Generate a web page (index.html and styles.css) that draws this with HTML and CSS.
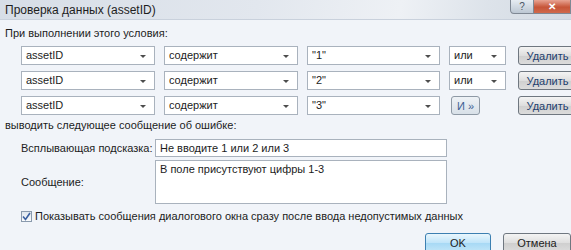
FILE: index.html
```html
<!DOCTYPE html>
<html lang="ru">
<head>
    <meta charset="UTF-8">
    <title>Проверка данных (assetID)</title>
    <link rel="stylesheet" href="styles.css">
</head>
<body>
    <div class="window">
        <div class="titlebar">
            <span class="title">Проверка данных (assetID)</span>
            <div class="controls">
                <span class="help">?</span>
                <span class="close">✕</span>
            </div>
        </div>
        <div class="content">
            <div class="caption">При выполнении этого условия:</div>
            <div class="rules">
                <div class="select">assetID</div>
                <div class="select">содержит</div>
                <div class="select">"1"</div>
                <div class="select">или</div>
                <button class="btn">Удалить</button>

                <div class="select">assetID</div>
                <div class="select">содержит</div>
                <div class="select">"2"</div>
                <div class="select">или</div>
                <button class="btn">Удалить</button>

                <div class="select">assetID</div>
                <div class="select">содержит</div>
                <div class="select">"3"</div>
                <div><button class="btn btn-and">И »</button></div>
                <button class="btn">Удалить</button>
            </div>
            <div class="caption caption-error">выводить следующее сообщение об ошибке:</div>
            <div class="form">
                <label class="label">Всплывающая подсказка:</label>
                <div class="field">Не вводите 1 или 2 или 3</div>
                <label class="label">Сообщение:</label>
                <div class="field field-area">В поле присутствуют цифры 1-3</div>
            </div>
            <div class="check-row">
                <span class="checkbox">
                    <svg width="9" height="9" viewBox="0 0 9 9"><path d="M1 4.5 L3.5 7.5 L8 1" fill="none" stroke="#3a5fa0" stroke-width="1.6"/></svg>
                </span>
                <span>Показывать сообщения диалогового окна сразу после ввода недопустимых данных</span>
            </div>
            <div class="actions">
                <button class="btn btn-ok">OK</button>
                <button class="btn btn-cancel">Отмена</button>
            </div>
        </div>
    </div>
</body>
</html>
```

FILE: styles.css
```css
body, html {
    margin: 0;
    padding: 0;
    height: 100%;
    overflow: hidden;
    font-family: 'Liberation Sans', Arial, sans-serif;
    font-size: 11px;
    color: #1c1c1c;
}
.window {
    width: 571px;
    height: 250px;
    background: #f1f4f9;
    overflow: hidden;
}
.titlebar {
    height: 19px;
    display: flex;
    justify-content: space-between;
    align-items: flex-start;
    background: linear-gradient(100deg, #d7dee7 0%, #e2e7ee 45%, #eef1f5 70%, #dde3ea 85%, #d3dae3 100%);
    border-bottom: 1px solid #c9d1dc;
}
.title {
    padding: 3px 0 0 5px;
    font-size: 12px;
    color: #1e1e1e;
}
.controls {
    display: flex;
}
.help, .close {
    height: 13px;
    display: flex;
    align-items: center;
    justify-content: center;
    font-size: 10px;
    border: 1px solid #7f8894;
    border-top: none;
}
.help {
    width: 22px;
    background: linear-gradient(#e6ecf2, #bcc7d3);
    color: #4a5563;
    border-radius: 0 0 0 4px;
}
.close {
    width: 36px;
    background: linear-gradient(#e8a493, #c65538 55%, #d0694c);
    color: #fff;
    font-weight: bold;
    border-left: none;
}
.content {
    padding: 0 0 0 5px;
}
.caption {
    height: 14px;
    line-height: 14px;
    margin-top: 6px;
}
.rules {
    display: grid;
    grid-template-columns: 134px 134px 133px 57px 62px;
    grid-auto-rows: 19px;
    column-gap: 9px;
    row-gap: 6px;
    margin: 6px 0 0 16px;
}
.select {
    box-sizing: border-box;
    position: relative;
    background: #fff;
    border: 1px solid #a9b2bd;
    padding: 1px 0 0 4px;
    line-height: 15px;
}
.select::after {
    content: '';
    position: absolute;
    right: 8px;
    top: 8px;
    border-left: 3px solid transparent;
    border-right: 3px solid transparent;
    border-top: 3px solid #4d4d4d;
}
.btn {
    box-sizing: border-box;
    height: 19px;
    font-family: inherit;
    font-size: 11px;
    color: #1e3f6e;
    border: 1px solid #6f7780;
    border-radius: 3px;
    background: linear-gradient(#f4f4f4, #dedede 50%, #cfcfcf 51%, #dcdcdc);
    padding: 0;
    margin-left: 3px;
}
.btn-and {
    width: 29px;
    margin-left: 2px;
    color: #3c5f94;
    background: linear-gradient(#eef2f6, #d8e0e8);
    border-color: #8e99a5;
}
.caption-error {
    margin-top: 3px;
}
.form {
    display: grid;
    grid-template-columns: 134px 292px;
    grid-template-rows: 18px 44px;
    row-gap: 3px;
    margin: 7px 0 0 16px;
}
.label {
    display: flex;
    align-items: center;
}
.field {
    box-sizing: border-box;
    background: #fff;
    border: 1px solid #a9b2bd;
    padding: 1px 0 0 4px;
    line-height: 14px;
}
.check-row {
    display: flex;
    align-items: center;
    gap: 3px;
    margin: 5px 0 0 16px;
    height: 14px;
}
.checkbox {
    box-sizing: border-box;
    width: 11px;
    height: 11px;
    display: flex;
    align-items: center;
    justify-content: center;
    border: 1px solid #8a9aad;
    background: linear-gradient(#dfe6ee, #fafbfc);
}
.actions {
    display: flex;
    gap: 12px;
    margin: 10px 0 0 420px;
}
.btn-ok, .btn-cancel {
    width: 68px;
    height: 20px;
    margin: 0;
    color: #1c1c1c;
}
.btn-ok {
    border-color: #3c7fb1;
    background: linear-gradient(#e9f6fd, #bfe4f9 50%, #a7d9f5 51%, #c2e6f8);
}
.btn-cancel {
    flex-shrink: 0;
}
```
